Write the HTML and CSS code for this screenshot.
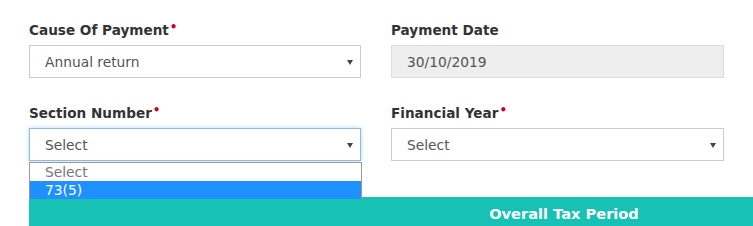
FILE: index.html
```html
<!DOCTYPE html>
<html lang="en">

<head>
    <meta charset="UTF-8">
    <meta name="viewport" content="width=device-width, initial-scale=1.0">
    <title>Payment</title>
    <link rel="stylesheet" href="styles.css">
</head>

<body>
    <div class="form-wrap">
        <div class="form-grid">
            <div class="field">
                <label class="field-label mandatory">Cause Of Payment</label>
                <div class="select-box">
                    <span class="select-text">Annual return</span>
                    <span class="caret"></span>
                </div>
            </div>
            <div class="field">
                <label class="field-label">Payment Date</label>
                <div class="select-box disabled">
                    <span class="select-text">30/10/2019</span>
                </div>
            </div>
            <div class="field"></div>

            <div class="field">
                <label class="field-label mandatory">Section Number</label>
                <div class="select-box focused">
                    <span class="select-text">Select</span>
                    <span class="caret"></span>
                    <!-- opened dropdown -->
                    <ul class="dropdown">
                        <li class="dropdown-item">Select</li>
                        <li class="dropdown-item selected">73(5)</li>
                    </ul>
                </div>
            </div>
            <div class="field">
                <label class="field-label mandatory">Financial Year</label>
                <div class="select-box">
                    <span class="select-text">Select</span>
                    <span class="caret"></span>
                </div>
            </div>
            <div class="field"></div>
        </div>

        <div class="period-bar">Overall Tax Period</div>
    </div>
</body>

</html>
```

FILE: styles.css
```css
* {
    margin: 0;
    padding: 0;
    box-sizing: border-box;
}

body {
    font-family: "DejaVu Sans", Verdana, sans-serif;
    background: #fff;
    color: #333;
    overflow: hidden;
    height: 226px;
}

.form-wrap {
    padding: 21px 0 0 29px;
    width: 1099px;
}

.form-grid {
    display: grid;
    grid-template-columns: 332px 333px 333px;
    column-gap: 30px;
    row-gap: 26px;
}

.field-label {
    display: block;
    height: 18px;
    font-size: 13.6px;
    font-weight: bold;
    line-height: 18px;
    color: #333;
    margin-bottom: 6px;
}

.mandatory::after {
    content: '\2022';
    color: #d0021b;
    font-size: 12px;
    line-height: 0;
    position: relative;
    top: -4px;
    margin-left: 1px;
}

.select-box {
    position: relative;
    display: flex;
    align-items: center;
    height: 33px;
    border: 1px solid #ccc;
    background: #fff;
    padding-left: 15px;
}

.select-text {
    font-size: 13.8px;
    color: #555;
}

.caret {
    position: absolute;
    right: 7px;
    top: 14px;
    width: 0;
    height: 0;
    border-left: 3px solid transparent;
    border-right: 3px solid transparent;
    border-top: 5px solid #444;
}

.disabled {
    background: #eee;
    border-color: #ddd;
}

.focused {
    border-color: #8fb9dd;
    box-shadow: 0 0 4px rgba(102, 175, 233, 0.5);
}

.dropdown {
    position: absolute;
    left: -1px;
    top: 33px;
    width: 333px;
    list-style: none;
    background: #fff;
    border: 1px solid #999;
    border-bottom: none;
    z-index: 5;
}

.dropdown-item {
    font-size: 13.8px;
    line-height: 18px;
    padding-left: 15px;
    color: #777;
}

.dropdown-item.selected {
    background: #1e90ff;
    color: #fff;
}

.period-bar {
    margin-top: 36px;
    background: #17c1b4;
    color: #fff;
    font-size: 14.6px;
    font-weight: bold;
    text-align: center;
    height: 40px;
    line-height: 34px;
}
```
